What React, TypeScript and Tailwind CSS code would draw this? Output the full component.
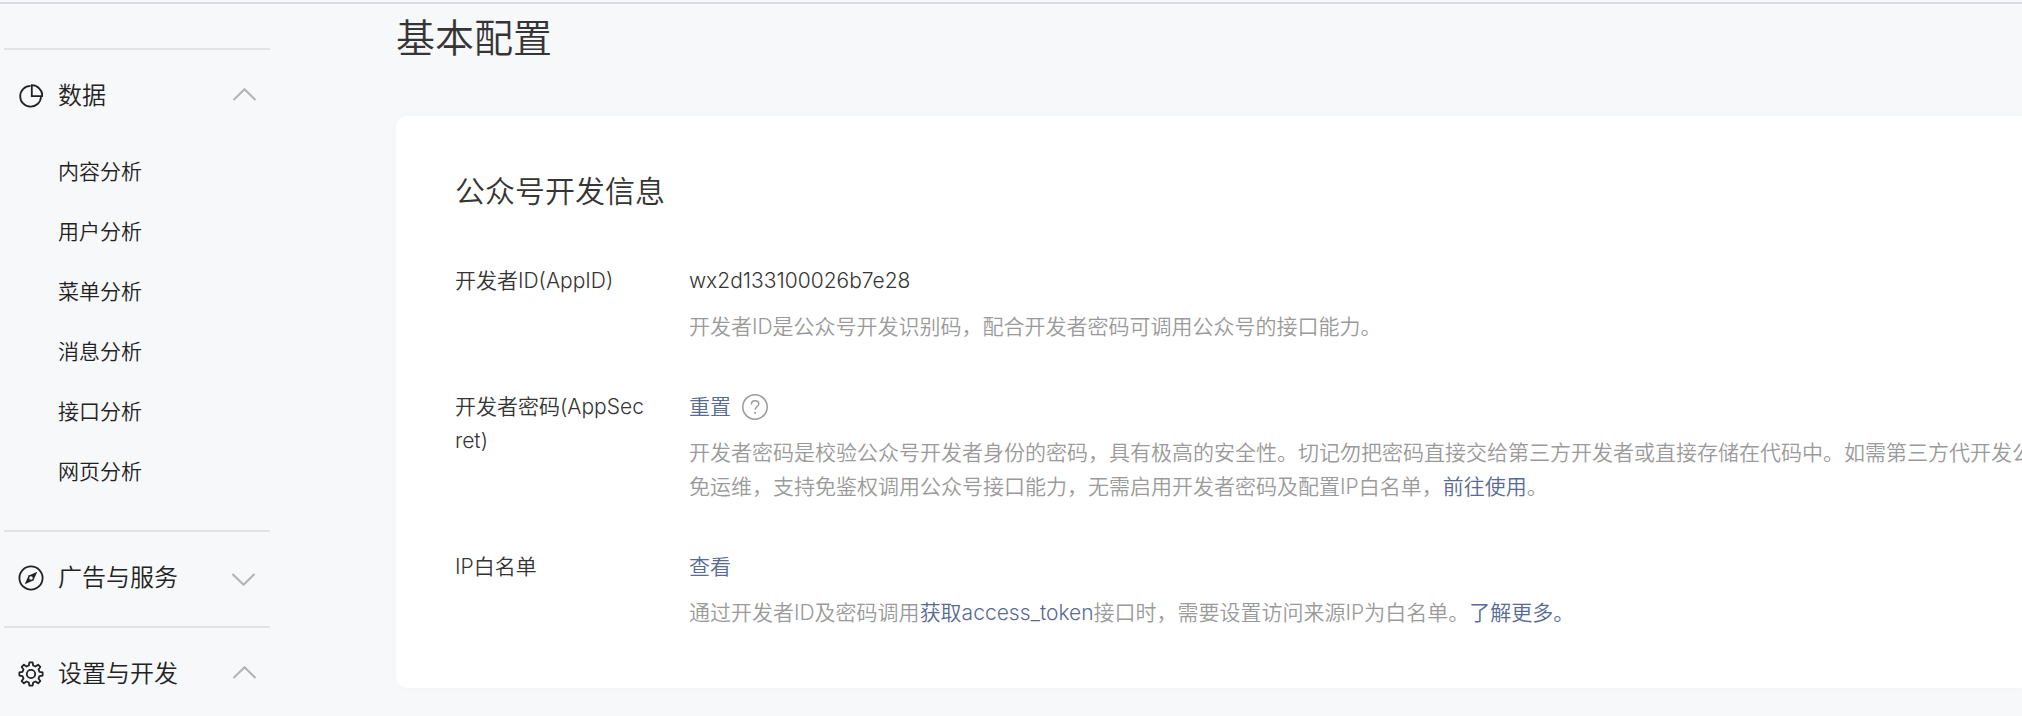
import type { ReactNode } from "react";

const dataItems = ["内容分析", "用户分析", "菜单分析", "消息分析", "接口分析", "网页分析"];

function PieIcon() {
  return (
    <svg className="size-6" viewBox="0 0 24 24" fill="none" stroke="currentColor" strokeWidth="1.8">
      <path d="M11.5 1.9A10.4 10.4 0 1 0 22 13" />
      <path d="M12.8 1.2V12.2H23.4A10.8 10.8 0 0 0 12.8 1.2Z" />
    </svg>
  );
}

function CompassIcon() {
  return (
    <svg className="size-6 overflow-visible" viewBox="0 0 24 24" fill="none">
      <circle cx="12" cy="12" r="11.6" stroke="currentColor" strokeWidth="1.8" />
      <path d="M18.3 5.7L9.2 9.8L14.2 14.8Z" fill="currentColor" />
      <path d="M5.7 18.3L9.8 9.2L14.8 14.2Z" fill="currentColor" />
      <circle cx="12" cy="12" r="1.8" fill="#f7f8fa" />
    </svg>
  );
}

function GearIcon() {
  return (
    <svg className="size-6 overflow-visible" viewBox="0 0 24 24" fill="none" stroke="currentColor" strokeWidth="1.8" strokeLinejoin="round">
      <path d="M10.4 0.4h3.2l0.6 3.1 2.3 1 2.6-1.8 2.2 2.2-1.8 2.6 1 2.3 3.1 0.6v3.2l-3.1 0.6-1 2.3 1.8 2.6-2.2 2.2-2.6-1.8-2.3 1-0.6 3.1h-3.2l-0.6-3.1-2.3-1-2.6 1.8-2.2-2.2 1.8-2.6-1-2.3-3.1-0.6v-3.2l3.1-0.6 1-2.3-1.8-2.6 2.2-2.2 2.6 1.8 2.3-1Z" />
      <circle cx="12" cy="12" r="4.2" />
    </svg>
  );
}

function Chevron({ open }: { open: boolean }) {
  return (
    <svg className="h-4 w-6 text-[#b2b3b5]" viewBox="0 0 24 16" fill="none" stroke="currentColor" strokeWidth="2">
      <path d={open ? "M1.5 12L12.5 1.2L23.5 12" : "M0.5 4L11.5 14.8L22.5 4"} />
    </svg>
  );
}

function HelpIcon() {
  return (
    <svg className="size-[26px]" viewBox="0 0 26 26" fill="none" stroke="currentColor" strokeWidth="1.5">
      <circle cx="13" cy="13" r="12.2" />
      <path d="M9.4 10.4C9.4 8.1 11 6.7 13.1 6.7C15.2 6.7 16.8 8.1 16.8 10C16.8 12.4 13.1 12.8 13.1 15.8" />
      <circle cx="13.1" cy="19" r="1.1" fill="currentColor" stroke="none" />
    </svg>
  );
}

function MenuSection({ icon, title, open, items = [] }: { icon: ReactNode; title: string; open: boolean; items?: string[] }) {
  return (
    <section className="border-t-2 border-[#e2e3e5] pb-[2px]">
      <button className="flex h-[92px] w-full items-center pr-[14px] pl-[15px] text-2xl" aria-expanded={open}>
        {icon}
        <span className="ml-[15px]">{title}</span>
        <span className="ml-auto">
          <Chevron open={open} />
        </span>
      </button>
      {items.length > 0 && (
        <ul className="pb-[26px] pl-[54px]">
          {items.map((item) => (
            <li key={item}>
              <a href="#" className="block leading-[60px]">{item}</a>
            </li>
          ))}
        </ul>
      )}
    </section>
  );
}

function Row({ label, value, children }: { label: string; value: ReactNode; children: ReactNode }) {
  return (
    <div className="flex gap-[42px]">
      <dt className="w-48 shrink-0 break-all">{label}</dt>
      <dd className="min-w-0">
        <div className="flex items-center gap-[11px]">{value}</div>
        <p className="mt-3 whitespace-nowrap text-[#9a9a9a]">{children}</p>
      </dd>
    </div>
  );
}

function Link({ children }: { children: ReactNode }) {
  return <a href="#" className="text-[#576b95]">{children}</a>;
}

export default function App() {
  return (
    <div className="h-screen overflow-hidden bg-[#f7f8fa] font-['Inter','Noto_Sans_CJK_SC',sans-serif] text-[21px] leading-[34px] font-[350] text-[#353535]">
      <header className="h-1 border-b-2 border-[#d9dadf] bg-[#f7f8fa]" />
      <div className="flex">
        <aside className="ml-1 w-[266px] shrink-0 pt-11 text-[#222222]">
          <MenuSection icon={<PieIcon />} title="数据" open items={dataItems} />
          <MenuSection icon={<CompassIcon />} title="广告与服务" open={false} />
          <MenuSection icon={<GearIcon />} title="设置与开发" open />
        </aside>
        <main className="ml-[126px] min-w-0 flex-1 pt-2">
          <h1 className="text-[39px] leading-[52px] font-[350]">基本配置</h1>
          <div className="mt-[52px] rounded-l-xl bg-white px-[59px] pt-[54px] pb-[58px] shadow-[0_0_12px_rgba(0,0,0,0.02)]">
            <h2 className="text-3xl leading-[42px] font-[350]">公众号开发信息</h2>
            <dl className="mt-[52px] flex flex-col gap-[46px]">
              <Row label="开发者ID(AppID)" value="wx2d133100026b7e28">
                开发者ID是公众号开发识别码，配合开发者密码可调用公众号的接口能力。
              </Row>
              <Row
                label="开发者密码(AppSecret)"
                value={
                  <>
                    <Link>重置</Link>
                    <button aria-label="帮助" className="text-[#9a9a9a]">
                      <HelpIcon />
                    </button>
                  </>
                }
              >
                开发者密码是校验公众号开发者身份的密码，具有极高的安全性。切记勿把密码直接交给第三方开发者或直接存储在代码中。如需第三方代开发公
                <br />
                免运维，支持免鉴权调用公众号接口能力，无需启用开发者密码及配置IP白名单，<Link>前往使用</Link>。
              </Row>
              <Row label="IP白名单" value={<Link>查看</Link>}>
                通过开发者ID及密码调用<Link>获取access_token</Link>接口时，需要设置访问来源IP为白名单。<Link>了解更多。</Link>
              </Row>
            </dl>
          </div>
        </main>
      </div>
    </div>
  );
}
